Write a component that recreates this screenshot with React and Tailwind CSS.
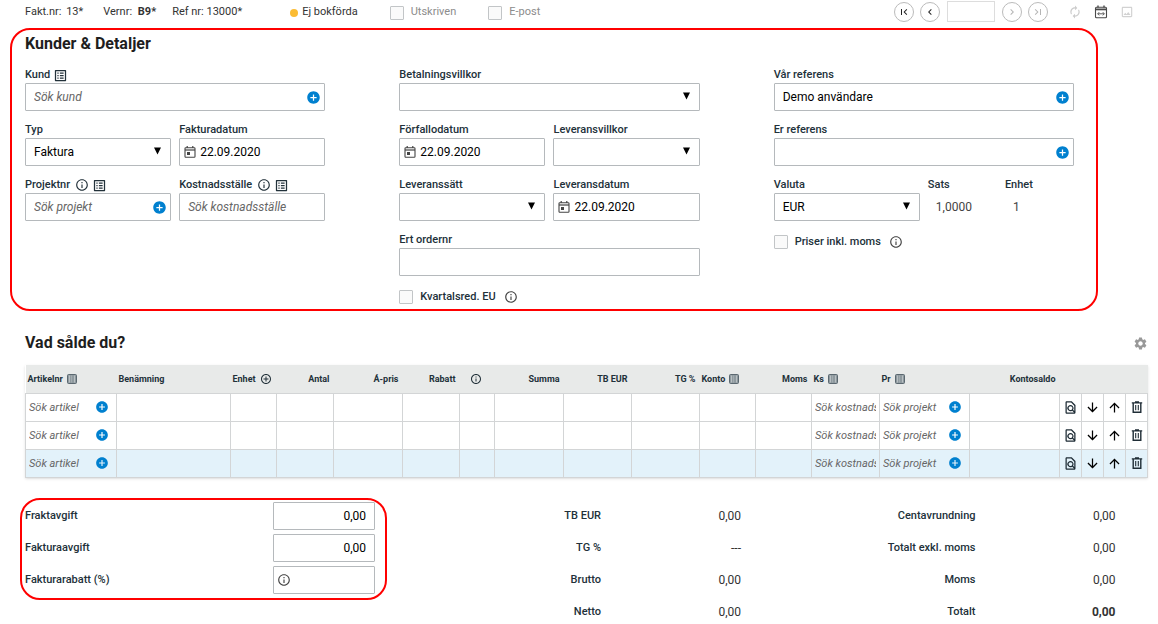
import { useId } from "react";
import clsx from "clsx";
import {
  MdAddCircle,
  MdAddCircleOutline,
  MdArrowDownward,
  MdArrowUpward,
  MdAutorenew,
  MdChevronLeft,
  MdChevronRight,
  MdFirstPage,
  MdLastPage,
  MdInfoOutline,
  MdOutlineFindInPage,
  MdOutlineImage,
  MdOutlineListAlt,
  MdSettings,
} from "react-icons/md";

function ColumnsIcon() {
  return (
    <svg width="10" height="10" viewBox="0 0 10 10" className="shrink-0">
      <rect x="0.5" y="0.5" width="9" height="9" rx="1" fill="#8f9a9f" stroke="#5b6870" />
      <path d="M2.5 1.5v7M7.5 1.5v7" stroke="#b9c0c3" />
      <path d="M4.5 1.5v7" stroke="#a3acb0" />
    </svg>
  );
}

function DateIcon({ className }) {
  return (
    <svg width="12" height="12" viewBox="0 0 12 12" fill="none" stroke="#444" className={className}>
      <rect x="1" y="1.7" width="10" height="9.6" rx="0.8" strokeWidth="1.1" />
      <path d="M1 4h10" strokeWidth="1.2" />
      <path d="M3.2 0v2M8.8 0v2" strokeWidth="1.2" />
      <path d="M3 6h3v3H3z" fill="#444" stroke="none" />
    </svg>
  );
}

function CalendarRangeIcon() {
  return (
    <svg width="14" height="14" viewBox="0 0 14 14" fill="none" stroke="#4a4a4a">
      <rect x="1.5" y="2.2" width="11" height="10.6" rx="1" strokeWidth="1.1" />
      <path d="M1.5 4.4h11" strokeWidth="1.8" />
      <path d="M4 0.5v2M10 0.5v2" strokeWidth="1.4" />
      <path d="M4 8.8h6M5.2 7.2 3.6 8.8l1.6 1.6M8.8 7.2l1.6 1.6-1.6 1.6" strokeWidth="0.9" />
    </svg>
  );
}

function TrashIcon() {
  return (
    <svg width="12" height="12" viewBox="0 0 12 12" fill="none" stroke="#1f2d36">
      <path d="M0.8 1.8h10.4M4 0.8h4" strokeWidth="1.3" />
      <path d="M2.2 2v9.3h7.6V2" strokeWidth="1.4" />
      <path d="M4.7 4v5.2M7.3 4v5.2" strokeWidth="1.1" />
    </svg>
  );
}

const fieldBox =
  "h-7 w-full rounded-[1px] border border-[#b5b9bc] bg-white text-xs text-black outline-none placeholder:italic placeholder:text-[#666]";

function Label({ htmlFor, children, info, list }) {
  return (
    <div className="flex h-[18px] items-center pt-0.5 text-[#22313a]">
      <label htmlFor={htmlFor} className="text-[11px] font-medium">
        {children}
      </label>
      {info && <MdInfoOutline size={14} className="ml-[5px]" />}
      {list && <MdOutlineListAlt size={15} className="ml-[3px]" />}
    </div>
  );
}

function TextField({ label, info, list, add, date, ...props }) {
  const id = useId();
  return (
    <div>
      <Label htmlFor={id} info={info} list={list}>
        {label}
      </Label>
      <div className="relative">
        <input id={id} type="text" className={clsx(fieldBox, date ? "pl-5" : "pl-2", add ? "pr-7" : "pr-2")} {...props} />
        {date && <DateIcon className="pointer-events-none absolute left-[5px] top-2" />}
        {add && (
          <button type="button" aria-label={`Lägg till ${label}`} className="absolute right-1 top-[7px] text-[#0080cf]">
            <MdAddCircle size={15} />
          </button>
        )}
      </div>
    </div>
  );
}

function SelectField({ label, value = "" }) {
  const id = useId();
  return (
    <div>
      <Label htmlFor={id}>{label}</Label>
      <div className="relative">
        <select id={id} defaultValue={value} className={clsx(fieldBox, "appearance-none pl-2 pr-6")}>
          <option value={value}>{value}</option>
        </select>
        <svg width="7" height="8" viewBox="0 0 7 8" className="pointer-events-none absolute right-[10px] top-[9px]">
          <path d="M0 0.5h7L3.5 7.5z" />
        </svg>
      </div>
    </div>
  );
}

function Checkbox({ label, muted, info }) {
  return (
    <div className="flex items-center text-[#22313a]">
      <label
        className={clsx("flex items-center gap-[7px] text-[11px]", muted ? "text-[#8c8c8c]" : "font-medium")}
      >
        <input
          type="checkbox"
          className="size-[14px] appearance-none rounded-[1px] border border-[#c2c5c7] bg-[#fafafa] checked:bg-[#0080cf]"
        />
        {label}
      </label>
      {info && <MdInfoOutline size={14} className="ml-2 text-[#444]" />}
    </div>
  );
}

function Fact({ label, value }) {
  return (
    <div>
      <div className="flex h-[18px] items-center pt-0.5 text-[11px] font-medium text-[#22313a]">{label}</div>
      <div className="flex h-7 items-center pl-2 text-xs text-[#444]">{value}</div>
    </div>
  );
}

function PagerButton({ label, icon: Icon, disabled }) {
  return (
    <button
      type="button"
      aria-label={label}
      disabled={disabled}
      className={clsx(
        "flex size-5 items-center justify-center rounded-full border border-[#bbb] bg-white",
        disabled ? "text-[#b5b5b5]" : "text-[#222]"
      )}
    >
      <Icon size={12} />
    </button>
  );
}

function TopBar() {
  return (
    <header className="flex h-7 items-start justify-between pl-[25px] pr-6 pt-px text-[11px] text-[#333]">
      <div className="flex h-[23px] items-center">
        <span className="mr-5">
          Fakt.nr: <span className="ml-0.5">13*</span>
        </span>
        <span className="mr-4">
          Vernr: <b className="ml-[3px]">B9*</b>
        </span>
        <span className="mr-12">Ref nr: 13000*</span>
        <span className="mr-1 size-2 rounded-full bg-[#fbbc34]" />
        <span className="mr-8">Ej bokförda</span>
        <span className="mr-8">
          <Checkbox label="Utskriven" muted />
        </span>
        <Checkbox label="E-post" muted />
      </div>
      <div className="flex h-[21px] items-center">
        <div className="flex items-center gap-1.5">
          <PagerButton label="Första" icon={MdFirstPage} />
          <PagerButton label="Föregående" icon={MdChevronLeft} />
          <input aria-label="Fakturanummer" type="text" className="mx-px h-[21px] w-12 border border-[#ddd] px-1 outline-none" />
          <PagerButton label="Nästa" icon={MdChevronRight} disabled />
          <PagerButton label="Sista" icon={MdLastPage} disabled />
        </div>
        <div className="ml-5 flex items-center gap-3">
          <button type="button" aria-label="Uppdatera" className="text-[#ccc]">
            <MdAutorenew size={14} />
          </button>
          <button type="button" aria-label="Periodisering">
            <CalendarRangeIcon />
          </button>
          <button type="button" aria-label="Bild" className="text-[#d2d2d2]">
            <MdOutlineImage size={14} />
          </button>
        </div>
      </div>
    </header>
  );
}

function CustomerDetails() {
  return (
    <section className="ml-[10px] mr-[60px] rounded-[20px] border-2 border-[#f00] pl-[13px] pr-[22px] pt-0.5">
      <h2 className="mb-[9px] text-base font-bold leading-6 text-[#1e1e1e]">Kunder &amp; Detaljer</h2>
      <div className="grid grid-cols-3 gap-x-[74px]">
        <div className="flex flex-col gap-[9px]">
          <TextField label="Kund" list add placeholder="Sök kund" />
          <div className="grid grid-cols-2 gap-x-2 gap-y-[9px]">
            <SelectField label="Typ" value="Faktura" />
            <TextField label="Fakturadatum" date defaultValue="22.09.2020" />
            <TextField label="Projektnr" info list add placeholder="Sök projekt" />
            <TextField label="Kostnadsställe" info list placeholder="Sök kostnadsställe" />
          </div>
        </div>

        <div className="flex flex-col gap-[9px]">
          <SelectField label="Betalningsvillkor" />
          <div className="grid grid-cols-2 gap-x-2 gap-y-[9px]">
            <TextField label="Förfallodatum" date defaultValue="22.09.2020" />
            <SelectField label="Leveransvillkor" />
            <SelectField label="Leveranssätt" />
            <TextField label="Leveransdatum" date defaultValue="22.09.2020" />
          </div>
          <TextField label="Ert ordernr" />
          <div className="flex h-6 items-center">
            <Checkbox label="Kvartalsred. EU" info />
          </div>
        </div>

        <div className="flex flex-col gap-[9px]">
          <TextField label="Vår referens" add defaultValue="Demo användare" />
          <TextField label="Er referens" add />
          <div className="grid grid-cols-2 gap-x-2">
            <SelectField label="Valuta" value="EUR" />
            <div className="grid grid-cols-2 gap-x-2">
              <Fact label="Sats" value="1,0000" />
              <Fact label="Enhet" value="1" />
            </div>
          </div>
          <div className="flex h-6 items-center">
            <Checkbox label="Priser inkl. moms" info />
          </div>
        </div>
      </div>
    </section>
  );
}

const columns = [
  { label: "Artikelnr", width: "w-[91px]", icon: "columns", search: "Sök artikel", add: true },
  { label: "Benämning", width: "w-[114px]" },
  { label: "Enhet", width: "w-[46px]", icon: "add" },
  { label: "Antal", width: "w-[57px]", right: true },
  { label: "Á-pris", width: "w-[69px]", right: true },
  { label: "Rabatt", width: "w-[57px]", right: true },
  { label: "", width: "w-[35px]", icon: "info" },
  { label: "Summa", width: "w-[69px]", right: true },
  { label: "TB EUR", width: "w-[68px]", right: true },
  { label: "TG %", width: "w-[68px]", right: true },
  { label: "Konto", width: "w-[56px]", icon: "columns" },
  { label: "Moms", width: "w-[56px]", right: true },
  { label: "Ks", width: "w-[68px]", icon: "columns", search: "Sök kostnadsställe" },
  { label: "Pr", width: "w-[90px]", icon: "columns", search: "Sök projekt", add: true },
  { label: "Kontosaldo", width: "w-[90px]", right: true },
];

const actions = [
  { label: "Visa", icon: <MdOutlineFindInPage size={15} className="text-[#1f2d36]" /> },
  { label: "Flytta ner", icon: <MdArrowDownward size={15} /> },
  { label: "Flytta upp", icon: <MdArrowUpward size={15} /> },
  { label: "Ta bort", icon: <TrashIcon /> },
];

function HeaderCell({ col }) {
  return (
    <th className="p-0 font-bold">
      <div
        className={clsx(
          "flex items-center gap-1 whitespace-nowrap pl-0.5 pr-1 pt-px",
          col.right && "justify-end",
          !col.label && "justify-center"
        )}
      >
        {col.label}
        {col.icon === "columns" && <ColumnsIcon />}
        {col.icon === "add" && <MdAddCircleOutline size={12} className="shrink-0" />}
        {col.icon === "info" && <MdInfoOutline size={12} className="shrink-0" />}
      </div>
    </th>
  );
}

function InvoiceRows() {
  return (
    <section className="pl-[25px] pr-[10px] pt-5">
      <div className="mb-[10px] flex h-6 items-center justify-between">
        <h2 className="text-base font-bold leading-6 text-[#1e1e1e]">Vad sålde du?</h2>
        <button type="button" aria-label="Inställningar" className="text-[#999]">
          <MdSettings size={15} />
        </button>
      </div>
      <table className="w-full table-fixed border-collapse shadow">
        <colgroup>
          {columns.map((col, i) => (
            <col key={i} className={col.width} />
          ))}
          {actions.map((a) => (
            <col key={a.label} className="w-[22px]" />
          ))}
        </colgroup>
        <thead>
          <tr className="h-7 bg-[#e8eae9] text-[9px] text-[#22313a]">
            {columns.map((col, i) => (
              <HeaderCell key={i} col={col} />
            ))}
            <th colSpan={4} />
          </tr>
        </thead>
        <tbody>
          {[0, 1, 2].map((row) => (
            <tr key={row} className={clsx("h-7", row === 2 ? "bg-[#e3f2fa]" : "bg-white")}>
              {columns.map((col, i) => (
                <td key={i} className="border border-[#d3d5d6] p-0">
                  <div className="flex items-center pl-[3px] pr-[3px]">
                    <input
                      type="text"
                      aria-label={`${col.label || "Rabattinfo"} rad ${row + 1}`}
                      placeholder={col.search}
                      className="w-full min-w-0 bg-transparent pt-0.5 text-[11px] outline-none placeholder:italic placeholder:text-[#666]"
                    />
                    {col.add && (
                      <button type="button" aria-label={`Lägg till ${col.label}`} className="mr-1 text-[#0080cf]">
                        <MdAddCircle size={14} />
                      </button>
                    )}
                  </div>
                </td>
              ))}
              {actions.map((a) => (
                <td key={a.label} className="border border-[#d3d5d6] p-0">
                  <button type="button" aria-label={a.label} className="flex w-full items-center justify-center">
                    {a.icon}
                  </button>
                </td>
              ))}
            </tr>
          ))}
        </tbody>
      </table>
    </section>
  );
}

function FeeRow({ label, value, info }) {
  const id = useId();
  return (
    <div className="flex h-7 items-center justify-between">
      <label htmlFor={id} className="pt-0.5 text-[11px] font-medium text-[#22313a]">
        {label}
      </label>
      <div className="relative w-[102px]">
        <input id={id} type="text" defaultValue={value} className={clsx(fieldBox, "px-2 text-right")} />
        {info && <MdInfoOutline size={14} className="absolute left-1 top-[7px] text-[#444]" />}
      </div>
    </div>
  );
}

function Totals({ rows }) {
  return (
    <dl className="flex flex-col gap-2 pt-1.5 text-[11px] leading-6">
      {rows.map(([label, value, bold]) => (
        <div key={label} className="flex">
          <dt className="w-[202px] text-right font-medium text-[#22313a]">{label}</dt>
          <dd className={clsx("w-[140px] text-right text-xs leading-6 text-[#333]", bold && "font-bold")}>{value}</dd>
        </div>
      ))}
    </dl>
  );
}

function Summary() {
  return (
    <section className="grid grid-cols-[379px_1fr_1fr] items-start pl-5 pr-[10px] pt-5">
      <div className="mr-3 flex flex-col gap-1 rounded-[20px] border-2 border-[#f00] pb-1 pl-[3px] pr-[10px] pt-0.5">
        <FeeRow label="Fraktavgift" value="0,00" />
        <FeeRow label="Fakturaavgift" value="0,00" />
        <FeeRow label="Fakturarabatt (%)" value="" info />
      </div>
      <Totals
        rows={[
          ["TB EUR", "0,00"],
          ["TG %", "---"],
          ["Brutto", "0,00"],
          ["Netto", "0,00"],
        ]}
      />
      <Totals
        rows={[
          ["Centavrundning", "0,00"],
          ["Totalt exkl. moms", "0,00"],
          ["Moms", "0,00"],
          ["Totalt", "0,00", true],
        ]}
      />
    </section>
  );
}

export default function App() {
  return (
    <main className="bg-white font-[Roboto,sans-serif]">
      <TopBar />
      <CustomerDetails />
      <InvoiceRows />
      <Summary />
    </main>
  );
}
